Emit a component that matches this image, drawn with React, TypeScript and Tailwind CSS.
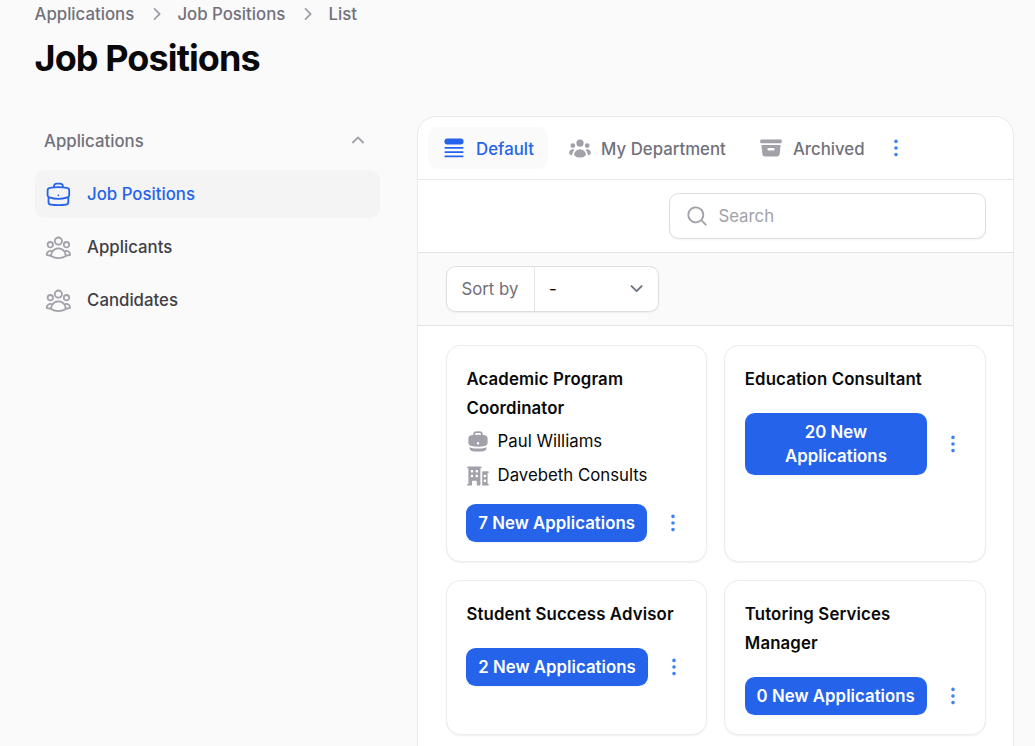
import {
  HiMiniArchiveBox,
  HiMiniBriefcase,
  HiMiniBuildingOffice2,
  HiMiniChevronRight,
  HiMiniChevronUp,
  HiMiniEllipsisVertical,
  HiMiniMagnifyingGlass,
  HiMiniQueueList,
  HiMiniUserGroup,
  HiOutlineBriefcase,
  HiOutlineUserGroup,
} from 'react-icons/hi2';

interface Position {
  title: string;
  manager?: string;
  company?: string;
  count: number;
}

const POSITIONS: Position[] = [
  { title: 'Academic Program Coordinator', manager: 'Paul Williams', company: 'Davebeth Consults', count: 7 },
  { title: 'Education Consultant', count: 20 },
  { title: 'Student Success Advisor', count: 2 },
  { title: 'Tutoring Services Manager', count: 0 },
];

const NAV = [
  { label: 'Job Positions', icon: HiOutlineBriefcase, active: true },
  { label: 'Applicants', icon: HiOutlineUserGroup, active: false },
  { label: 'Candidates', icon: HiOutlineUserGroup, active: false },
];

const TABS = [
  { label: 'Default', icon: HiMiniQueueList, active: true },
  { label: 'My Department', icon: HiMiniUserGroup, active: false },
  { label: 'Archived', icon: HiMiniArchiveBox, active: false },
];

function Breadcrumbs() {
  return (
    <nav className="flex items-center h-6 mt-0.5 text-[16.8px] leading-6 font-medium text-[#71717a]">
      <span>Applications</span>
      <HiMiniChevronRight className="size-6 mx-[9.6px] text-[#a1a1aa]" />
      <span>Job Positions</span>
      <HiMiniChevronRight className="size-6 mx-[9.6px] text-[#a1a1aa]" />
      <span>List</span>
    </nav>
  );
}

function Sidebar() {
  return (
    <aside className="w-[345px] shrink-0 pt-[13px]">
      <div className="flex items-center justify-between h-6 pl-[9.5px] pr-[9.5px]">
        <span className="text-[16.8px] leading-6 font-medium text-[#71717a]">Applications</span>
        <HiMiniChevronUp className="size-6 text-[#a1a1aa]" />
      </div>
      <ul className="mt-[17px] flex flex-col gap-[5px]">
        {NAV.map(({ label, icon: Icon, active }) => (
          <li
            key={label}
            className={`flex items-center gap-[14.4px] h-12 px-[9.4px] rounded-[9.6px] ${active ? 'bg-[#f4f4f5]' : ''}`}
          >
            <Icon className={`size-[28.8px] ${active ? 'text-[#2563eb]' : 'text-[#a1a1aa]'}`} />
            <span className={`text-[16.8px] leading-6 font-medium ${active ? 'text-[#2563eb]' : 'text-[#3f3f46]'}`}>
              {label}
            </span>
          </li>
        ))}
      </ul>
    </aside>
  );
}

function PositionCard({ title, manager, company, count }: Position) {
  return (
    <div className="rounded-[14.4px] bg-white border border-[#ececed] shadow-[0_1px_2px_rgba(0,0,0,0.06)] py-[19px] px-[19.4px]">
      <h3 className="pr-1 text-[16.8px] leading-[28.8px] font-semibold tracking-[0.14px] text-[#09090b]">{title}</h3>
      {manager && (
        <div className="flex items-center gap-[7.2px] h-[34px] mt-0.5 text-[16.8px] text-[#09090b]">
          <HiMiniBriefcase className="size-6 text-[#a1a1aa]" />
          <span>{manager}</span>
        </div>
      )}
      {company && (
        <div className="flex items-center gap-[7.2px] h-[34px] text-[16.8px] text-[#09090b]">
          <HiMiniBuildingOffice2 className="size-6 text-[#a1a1aa]" />
          <span>{company}</span>
        </div>
      )}
      <div className={`flex items-center gap-[14.4px] ${manager ? 'mt-[11px]' : 'mt-[19px]'}`}>
        <button className="rounded-[9.6px] bg-[#2563eb] px-[11.8px] py-[7.2px] text-[16.8px] leading-6 font-semibold tracking-[0.04px] text-white shadow-[0_1px_2px_rgba(0,0,0,0.05)]">
          {count} New Applications
        </button>
        <HiMiniEllipsisVertical className="size-6 shrink-0 text-[#3b82f6]" />
      </div>
    </div>
  );
}

export default function App() {
  return (
    <div className="h-[746px] w-[1035px] overflow-hidden bg-[#fafafa] pl-[34.5px] font-['Inter',sans-serif]">
      <Breadcrumbs />
      <h1 className="mt-2 h-12 text-[36px] leading-[48px] font-bold tracking-[-0.9px] text-[#09090b]">Job Positions</h1>

      <div className="mt-[34px] flex gap-[37.8px]">
        <Sidebar />

        <main className="w-[597.2px] h-[760px] shrink-0 rounded-t-[19px] bg-white border border-[#e9e9ea]">
          {/* Tabs */}
          <div className="flex items-center h-[63px] pl-[9.8px] border-b border-[#e9e9ea]">
            {TABS.map(({ label, icon: Icon, active }) => (
              <div
                key={label}
                className={`flex items-center gap-[9.6px] h-[42px] px-[14.4px] mr-[4.8px] rounded-[9.6px] ${active ? 'bg-[#fafafa]' : ''}`}
              >
                <Icon className={`size-6 ${active ? 'text-[#2563eb]' : 'text-[#a1a1aa]'}`} />
                <span className={`pt-0.5 text-[16.8px] leading-6 font-medium ${active ? 'text-[#2563eb]' : 'text-[#71717a]'}`}>
                  {label}
                </span>
              </div>
            ))}
            <HiMiniEllipsisVertical className="size-6 text-[#3b82f6]" />
          </div>

          <div className="flex justify-end items-center h-[73px] px-[27.7px] border-b border-[#e4e4e6]">
            <div className="flex items-center w-[317px] h-[46px] px-[15px] gap-[9.6px] rounded-[9.6px] bg-white border border-[#dededf] shadow-[0_1px_2px_rgba(0,0,0,0.05)]">
              <HiMiniMagnifyingGlass className="size-6 text-[#a1a1aa]" />
              <span className="pt-0.5 text-[16.8px] text-[#a1a1aa]">Search</span>
            </div>
          </div>

          <div className="flex items-center h-[73px] px-[27.7px] bg-[#fafafa] border-b border-[#e4e4e6]">
            <div className="flex w-[213.4px] h-[46px] rounded-[9.6px] bg-white border border-[#dededf] shadow-[0_1px_2px_rgba(0,0,0,0.05)] text-[16.8px]">
              <span className="flex items-center w-[88px] pt-0.5 pl-[14.4px] border-r border-[#e4e4e6] text-[#71717a]">Sort by</span>
              <div className="flex flex-1 items-center justify-between pl-[14px] pr-[9.6px] text-[#09090b]">
                <span className="pt-0.5">-</span>
                <svg viewBox="0 0 20 20" className="size-[25.2px]" fill="none" stroke="#6b7280" strokeWidth="1.5" strokeLinecap="round" strokeLinejoin="round">
                  <path d="M6 8l4 4 4-4" />
                </svg>
              </div>
            </div>
          </div>

          {/* Cards */}
          <div className="grid grid-cols-2 gap-x-[17px] gap-y-[18px] px-[27.7px] pt-[19px]">
            {POSITIONS.map(position => (
              <PositionCard key={position.title} {...position} />
            ))}
          </div>
        </main>
      </div>
    </div>
  );
}
